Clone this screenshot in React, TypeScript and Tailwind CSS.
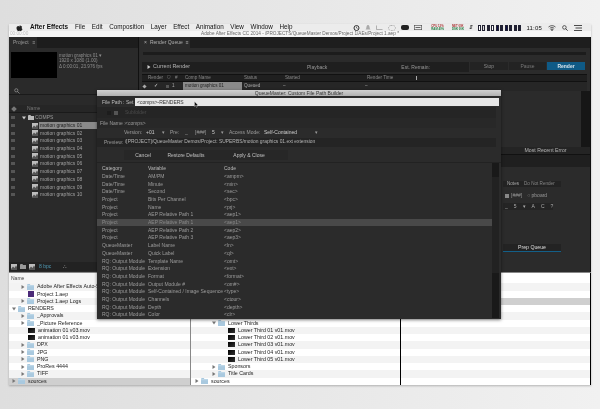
import React from "react";

const Tri = ({ open, c = "#777" }: { open?: boolean; c?: string }) => (
  <svg width="4" height="4" viewBox="0 0 4 4" className="shrink-0">
    <path d={open ? "M0 .5H4L2 3.5Z" : "M.5 0V4L3.5 2Z"} fill={c} />
  </svg>
);
const Folder = ({ c = "#a9c9df" }: { c?: string }) => (
  <svg width="7" height="6" viewBox="0 0 7 6" className="shrink-0">
    <path d="M0 1V6H7V1H3.4L2.8 0H.6Z" fill={c} />
    <path d="M0 1.7H7" stroke="#d8e8f2" strokeWidth=".5" />
  </svg>
);
const Mov = () => (
  <svg width="7" height="5" viewBox="0 0 7 5" className="shrink-0">
    <defs>
      <linearGradient id="mv" x1="0" y1="0" x2="1" y2="1">
        <stop offset="0" stopColor="#000" />
        <stop offset="1" stopColor="#333" />
      </linearGradient>
    </defs>
    <rect width="7" height="5" fill="url(#mv)" />
  </svg>
);
const CompIcon = () => (
  <svg width="6" height="6" viewBox="0 0 6 6" className="shrink-0">
    <rect width="6" height="6" fill="#bdbdbd" />
    <path d="M0 5L2 2.5L3.5 4L5 1.5L6 3V6H0Z" fill="#555" />
  </svg>
);

const comps = ["01", "02", "03", "04", "05", "06", "07", "08", "09", "10"];

const table: [string, string, string, boolean?][] = [
  ["Date/Time", "AM/PM", "<ampm>"],
  ["Date/Time", "Minute", "<min>"],
  ["Date/Time", "Second", "<sec>"],
  ["Project", "Bits Per Channel", "<bpc>"],
  ["Project", "Name", "<prj>"],
  ["Project", "AEP Relative Path 1", "<aep1>"],
  ["Project", "AEP Relative Path 1", "<aep1>", true],
  ["Project", "AEP Relative Path 2", "<aep2>"],
  ["Project", "AEP Relative Path 3", "<aep3>"],
  ["QueueMaster", "Label Name", "<ln>"],
  ["QueueMaster", "Quick Label", "<ql>"],
  ["RQ: Output Module", "Template Name", "<omt>"],
  ["RQ: Output Module", "Extension", "<ext>"],
  ["RQ: Output Module", "Format", "<format>"],
  ["RQ: Output Module", "Output Module #", "<om#>"],
  ["RQ: Output Module", "Self-Contained / Image Sequence", "<type>"],
  ["RQ: Output Module", "Channels", "<ctour>"],
  ["RQ: Output Module", "Depth", "<depth>"],
  ["RQ: Output Module", "Color", "<clr>"],
];

type L = { t: string; k: "f" | "m" | "a" | ""; tw?: "o" | "c"; pl: string; bg?: string };
const left: L[] = [
  { t: "Adobe After Effects Auto-Save", k: "f", tw: "c", pl: "pl-[12px]" },
  { t: "Project 1.aep", k: "a", pl: "pl-[19px]" },
  { t: "Project 1.aep Logs", k: "f", tw: "c", pl: "pl-[12px]" },
  { t: "RENDERS", k: "f", tw: "o", pl: "pl-[3px]" },
  { t: "_Approvals", k: "f", tw: "c", pl: "pl-[12px]" },
  { t: "_Picture Reference", k: "f", tw: "c", pl: "pl-[12px]" },
  { t: "animation 01 v03.mov", k: "m", pl: "pl-[19px]" },
  { t: "animation 01 v03.mov", k: "m", pl: "pl-[19px]" },
  { t: "DPX", k: "f", tw: "c", pl: "pl-[12px]" },
  { t: "JPG", k: "f", tw: "c", pl: "pl-[12px]" },
  { t: "PNG", k: "f", tw: "c", pl: "pl-[12px]" },
  { t: "ProRes 4444", k: "f", tw: "c", pl: "pl-[12px]" },
  { t: "TIFF", k: "f", tw: "c", pl: "pl-[12px]" },
  { t: "sources", k: "f", tw: "c", pl: "pl-[3px]", bg: "bg-[#cfcfcf]" },
];
const mid: L[] = [
  { t: "", k: "", pl: "" },
  { t: "", k: "", pl: "" },
  { t: "", k: "", pl: "" },
  { t: "", k: "", pl: "" },
  { t: "", k: "", pl: "" },
  { t: "Lower Thirds", k: "f", tw: "o", pl: "pl-[21px]" },
  { t: "Lower Third 01 v01.mov", k: "m", pl: "pl-[37px]" },
  { t: "Lower Third 02 v01.mov", k: "m", pl: "pl-[37px]" },
  { t: "Lower Third 03 v01.mov", k: "m", pl: "pl-[37px]" },
  { t: "Lower Third 04 v01.mov", k: "m", pl: "pl-[37px]" },
  { t: "Lower Third 05 v01.mov", k: "m", pl: "pl-[37px]" },
  { t: "Sponsors", k: "f", tw: "c", pl: "pl-[21px]" },
  { t: "Title Cards", k: "f", tw: "c", pl: "pl-[21px]" },
  { t: "sources", k: "f", tw: "c", pl: "pl-[4px]" },
];

const FileRow = ({ r, i }: { r: L; i: number }) => (
  <div className={`h-[7.25px] flex items-center gap-[2px] text-[5.3px] leading-none text-[#222] whitespace-nowrap overflow-hidden ${r.pl} ${r.bg ?? (i % 2 ? "bg-white" : "bg-[#f3f3f3]")}`}>
    {r.tw && <Tri open={r.tw === "o"} />}
    {r.k === "f" && <Folder />}
    {r.k === "m" && <Mov />}
    {r.k === "a" && <div className="w-[6px] h-[6px] bg-[#4b2a78] shrink-0" />}
    <span className="ml-[1px]">{r.t}</span>
  </div>
);

const Bars = () => (
  <div className="flex items-end gap-[1.5px] h-[7px]">
    {["#fff", "#ddd", "#223", "#fff", "#114", "#223", "#114", "#223", "#223", "#223"].map((c, i) => (
      <div key={i} className="w-[3px] h-[6px] border-[0.5px] border-[#223]" style={{ background: c }} />
    ))}
  </div>
);

export default function App() {
  return (
    <div className="relative w-[600px] h-[409px] overflow-hidden bg-gradient-to-r from-[#dedede] to-[#f1f1f1] pt-[24px] pl-[9px] font-['Liberation_Sans',sans-serif] blur-[0.4px]">
      <div className="w-[582px] h-[361px] flex flex-col shadow-[0_1px_2px_rgba(0,0,0,0.25)]">
        {/* menu bar */}
        <div className="h-[7px] bg-[#ececec] flex items-center pl-[7px] pr-[9px] text-[#111] text-[6.3px] leading-none">
          <svg width="7" height="6" viewBox="0 0 7 7" className="mr-[7px]"><path d="M5 1.2C4 1.2 3.8 1.7 3.4 1.7 3 1.7 2.6 1.2 2 1.2 1 1.2 0 2 0 3.6 0 5 1 7 2 7c.6 0 .8-.4 1.4-.4S4.300 7 5 7C6 7 7 5.200 7 4.800 6 4.400 5.800 2.600 6.600 2 6.200 1.400 5.600 1.200 5 1.200ZM4.900 0C4.100.1 3.500.7 3.500 1.200 4.200 1.200 4.900.6 4.900 0Z" fill="#222" /></svg>
          <span className="font-bold mr-[7px] text-[6.4px]">After Effects</span>
          <div className="flex gap-[6.6px]">
            <span>File</span><span>Edit</span><span>Composition</span><span>Layer</span><span>Effect</span><span>Animation</span><span>View</span><span>Window</span><span>Help</span>
          </div>
          <div className="ml-auto flex items-center gap-[5px]">
            <svg width="7" height="6" viewBox="0 0 7 6"><circle cx="3.500" cy="3" r="2.500" fill="none" stroke="#333" /><path d="M3.500 1.500V3L4.500 3.500" stroke="#333" strokeWidth=".6" fill="none" /></svg>
            <svg width="6" height="6" viewBox="0 0 6 6"><path d="M3 0C1.500 0 1.500 2 1.200 3.500L.5 4.500H5.500L4.800 3.500C4.500 2 4.500 0 3 0Z" fill="#aaa" /></svg>
            <svg width="7" height="5" viewBox="0 0 7 5"><path d="M.5 .5V4.500H6.500" stroke="#888" fill="none" strokeWidth=".6" /></svg>
            <svg width="8" height="6" viewBox="0 0 8 6"><rect x=".5" y=".5" width="7" height="5" rx="2.500" fill="none" stroke="#888" strokeDasharray="1.500 1" strokeWidth=".6" /></svg>
            <div className="w-[8px] h-[5px] bg-[#222] rounded-[2px]" />
            <svg width="8" height="5" viewBox="0 0 8 5"><rect x=".3" y=".3" width="7.400" height="4.400" fill="none" stroke="#444" strokeWidth=".6" /><path d="M1.500 2.500H6.500" stroke="#444" strokeWidth=".8" /></svg>
            <div className="flex flex-col text-[2.8px] leading-[3px] font-bold ml-[4px] text-[#1b7a3d]"><span className="text-[#a33]">CPU 12%</span><span>RAM 40%</span></div>
            <div className="flex flex-col text-[2.8px] leading-[3px] font-bold ml-[3px] text-[#1b7a3d]"><span className="text-[#a33]">NET 00K</span><span>DSK 00K</span></div>
            <span className="text-[5px]">⇵</span>
            <Bars />
            <span className="text-[6px] tracking-[0.2px]">11:05</span>
            <svg width="8" height="6" viewBox="0 0 8 6" className="ml-[1px]"><path d="M.5 2C2.500 .2 5.500 .2 7.500 2M1.800 3.300C3 2.300 5 2.300 6.200 3.300M4 5.800L2.900 4.400C3.500 4 4.500 4 5.100 4.400Z" fill="none" stroke="#222" strokeWidth=".7" /></svg>
            <svg width="6" height="6" viewBox="0 0 6 6" className="ml-[1px]"><circle cx="2.400" cy="2.400" r="1.800" fill="none" stroke="#222" strokeWidth=".7" /><path d="M3.700 3.700L5.700 5.700" stroke="#222" strokeWidth=".8" /></svg>
            <svg width="8" height="6" viewBox="0 0 8 6" className="ml-[1px]"><path d="M0 .5H8M1.500 3H8M0 5.500H8" stroke="#222" strokeWidth=".8" /></svg>
          </div>
        </div>
        {/* title bar */}
        <div className="h-[6px] bg-[#f6f6f6] grid grid-cols-[1fr_auto_1fr] items-center pt-[1px] text-[4.7px] leading-none text-[#666] whitespace-nowrap">
          <span className="pl-[1px] text-[#bdbdbd]">00:00:00</span>
          <span>Adobe After Effects CC 2014 - /PROJECTS/QueueMaster Demos/Project 1/AEs/Project 1.aep *</span>
          <span />
        </div>

        {/* dark workspace */}
        <div className="h-[235px] flex bg-[#111] text-[#a8a8a8] text-[5px] leading-none">
          {/* project panel */}
          <div className="w-[129px] flex flex-col bg-[#2a2a2a]">
            <div className="h-[11px] bg-[#1d1d1d] flex">
              <div className="w-[28px] bg-[#2a2a2a] flex items-center pl-[4px] gap-[4px] text-[#999]">Project <span>≡</span></div>
            </div>
            <div className="h-[39px] flex pt-[4px] pl-[2px]">
              <div className="w-[46px] h-[26px] bg-black" />
              <div className="pl-[2px] pt-[2px] flex flex-col gap-[0.8px] text-[#8f8f8f] whitespace-nowrap text-[4.6px]">
                <span>motion graphics 01 ▾</span>
                <span>1920 x 1080 (1.00)</span>
                <span>Δ 0:00:01, 23.976 fps</span>
              </div>
            </div>
            <div className="h-[8px] flex items-center pl-[5px] border-b border-[#1a1a1a]">
              <svg width="6" height="6" viewBox="0 0 6 6"><circle cx="2.300" cy="2.300" r="1.600" fill="none" stroke="#999" strokeWidth=".7" /><path d="M3.400 3.400L5.500 5.500" stroke="#999" strokeWidth=".7" /></svg>
            </div>
            <div className="h-[11px]" />
            <div className="h-[8px] flex items-center bg-[#262626] border-b border-[#1a1a1a] pl-[3px] gap-[11px] text-[#777] mt-[-1px]">
              <div className="w-[4px] h-[4px] bg-[#777] rotate-45" />
              <span>Name</span>
            </div>
            <div className="h-[7.7px] flex items-center pl-[2px] gap-[5px] text-[#9a9a9a] mt-[1px]">
              <div className="w-[4px] h-[3px] bg-[#555]" />
              <div className="flex items-center gap-[1.500px] pl-[2px]">
                <Tri open c="#ccc" />
                <svg width="6" height="5" viewBox="0 0 6 5"><path d="M0 1V5H6V1H3L2.500 0H.5Z" fill="#bbb" /></svg>
                <span>COMPS</span>
              </div>
            </div>
            {comps.map((c, i) => (
              <div key={c} className="h-[7.7px] flex items-center pl-[2px] text-[5px] text-[#a0a0a0]">
                <div className="w-[4px] h-[3px] bg-[#555] mr-[17px]" />
                <CompIcon />
                <span className={`ml-[1px] h-full flex items-center pl-[1px] whitespace-nowrap ${i === 0 ? "w-[58px] bg-[#8a8a8a] text-[#222]" : ""}`}>
                  motion graphics {c}
                </span>
              </div>
            ))}
            <div className="flex-1" />
            <div className="h-[9px] bg-[#222] flex items-center pl-[2px] gap-[3px] mb-[1px]">
              <CompIcon />
              <svg width="6" height="5" viewBox="0 0 6 5"><path d="M0 1V5H6V1H3L2.500 0H.5Z" fill="#999" /></svg>
              <CompIcon />
              <span className="text-[#4f9ab5] ml-[1px]">8 bpc</span>
              <span className="ml-[9px] text-[#999]">⛬</span>
            </div>
          </div>

          {/* render queue */}
          <div className="ml-[1px] flex-1 flex flex-col bg-[#2b2b2b] mr-[1px]">
            <div className="h-[11px] bg-[#1e1e1e] flex">
              <div className="w-[51px] bg-[#2b2b2b] flex items-center pl-[5px] gap-[3px] text-[#b0b0b0] whitespace-nowrap">× <span>Render Queue</span> <span>≡</span></div>
            </div>
            <div className="h-[3px] mt-[4px] mx-[4px] bg-[#1c1c1c]" />
            <div className="h-[10px] mt-[7px] mx-[3px] flex text-[5px]">
              <div className="w-[327px] bg-[#1f1f1f] flex items-center text-[#b5b5b5] whitespace-nowrap">
                <div className="w-[34px] pl-[5px] flex items-center gap-[2px] text-[5.4px]"><Tri c="#ccc" /><span>Current Render</span></div>
                <span className="ml-[131px] text-[#999]">Playback</span>
                <span className="ml-[74px] text-[#999]">Est. Remain:</span>
              </div>
              <div className="ml-[1px] flex h-[8px] gap-[1px]">
                <div className="w-[38px] bg-[#232323] flex items-center justify-center text-[#888]">Stop</div>
                <div className="w-[37px] bg-[#232323] flex items-center justify-center text-[#777]">Pause</div>
                <div className="w-[38px] bg-[#0f5a86] flex items-center justify-center text-[#d7e4ec] font-bold">Render</div>
              </div>
            </div>
            <div className="h-[8px] mt-[2px] mx-[3px] bg-[#1f1f1f] border-y border-[#111] flex items-center text-[#888] text-[4.6px] whitespace-nowrap">
              <span className="w-[25px] pl-[6px]">Render</span>
              <span className="w-[8px]">⛉</span>
              <span className="w-[10px]">#</span>
              <span className="w-[59px]">Comp Name</span>
              <span className="w-[41px]">Status</span>
              <span className="w-[82px]">Started</span>
              <span className="w-[50px] border-r border-[#aaa]">Render Time</span>
            </div>
            <div className="h-[9px] mx-[3px] bg-[#262626] flex items-center text-[#aaa] text-[4.6px] whitespace-nowrap">
              <span className="w-[3px] ml-[1px] h-[3px] bg-[#aaa] rotate-45" />
              <span className="ml-[8px] w-[12px] text-[#ddd]">✓</span>
              <span className="w-[3px] h-[3px] bg-[#555]" />
              <span className="ml-[3px] w-[11px]">1</span>
              <span className="w-[59px] h-full flex items-center pl-[2px] bg-[#8a8a8a] text-[#222]">motion graphics 01</span>
              <span className="w-[41px] pl-[2px]">Queued</span>
              <span className="w-[82px]">–</span>
              <span>–</span>
            </div>
            <div className="flex-1 flex flex-col min-h-0">
              <div className="h-[56px] flex justify-end"><div className="w-[9px] bg-[#161616]" /></div>
              <div className="h-[8px] flex bg-[#242424] border-b border-[#111]">
                <div className="ml-auto w-[89px] flex items-center justify-center text-[#b5b5b5] text-[5.2px]">Most Recent Error</div>
              </div>
              <div className="h-[12px] bg-[#1f1f1f]" />
              <div className="flex-1 ml-auto w-[88px] flex flex-col pt-[14px] pl-[1px] text-[5px] text-[#aaa]">
                <div className="w-[58px] h-[6px] flex items-center bg-[#232323] gap-[5px] pl-[4px] text-[4.6px] whitespace-nowrap"><span>Notes</span><span className="text-[#888]">Do Not Render</span></div>
                <div className="flex items-center gap-[2px] mt-[6px] pl-[2px] text-[#999] whitespace-nowrap">
                  <span className="w-[4px] h-[4px] bg-[#888] inline-block" />
                  <span>[###]</span>
                  <span className="ml-[3px]">○ pboard</span>
                </div>
                <div className="flex items-center gap-[6px] mt-[5px] pl-[2px] w-[50px] h-[7px] bg-[#242424] text-[#aaa]">
                  <span>_</span><span>5</span><span>▾</span><span>A</span><span>C</span><span>?</span>
                </div>
                <div className="mt-[34px] w-[58px] h-[7px] bg-[#232323] flex items-center justify-center text-[#ddd] text-[5.2px]">Prep Queue</div>
                <div className="w-[58px] h-[1px] bg-[#135f88]" />
              </div>
            </div>
          </div>
        </div>

        {/* finder area */}
        <div className="h-[113px] flex bg-white border-t border-[#888]">
          <div className="w-[182px] border-r border-[#888] flex flex-col">
            <div className="h-[10.300px] flex items-center pl-[2px] text-[5px] leading-none text-[#444] bg-[#f5f5f5]">Name</div>
            {left.map((r, i) => <FileRow key={i} r={r} i={i} />)}
          </div>
          <div className="w-[210px] border-r border-black flex flex-col">
            <div className="h-[10.300px] bg-[#f5f5f5]" />
            {mid.map((r, i) => <FileRow key={i} r={r} i={i} />)}
          </div>
          <div className="flex-1 border-r border-black flex flex-col">
            <div className="h-[10.300px] bg-white" />
            {mid.map((_, i) => (
              <div key={i} className={`h-[7.250px] ${i === 2 ? "bg-[#cfcfcf]" : i % 2 ? "bg-white" : "bg-[#f3f3f3]"}`} />
            ))}
          </div>
        </div>
      </div>

      {/* dialog */}
      <div className="absolute left-[97px] top-[90px] w-[404px] h-[229px] bg-[#2b2b2b] shadow-[0_1px_3px_rgba(0,0,0,0.5)] flex flex-col text-[#9c9c9c] text-[5px] leading-none whitespace-nowrap overflow-hidden">
        <div className="h-[6px] bg-gradient-to-b from-[#d0d0d0] to-[#b0b0b0] flex items-center justify-center text-[5px] text-[#333]">
          <span>QueueMaster: Custom File Path Builder</span>
        </div>
        <div className="h-[8px] mt-[2px] flex items-center">
          <span className="ml-[5px] w-[24px] text-[#bbb]">File Path :</span>
          <span className="w-[9px] text-[#bbb]">Set</span>
          <div className="w-[364px] h-full bg-[#e6e6e6] flex items-center pl-[2px] text-[#333]">&lt;comps&gt;-RENDERS</div>
        </div>
        <div className="h-[11px] mt-[1px] flex items-center pl-[10px] bg-[#252525] mr-[5px]">
          <span className="w-[4px] h-[4px] bg-[#1d1d1d]" />
          <span className="ml-[3px] w-[4px] h-[4px] bg-[#555]" />
          <span className="ml-[7px] text-[#4a4a4a]">Subfolder</span>
        </div>
        <div className="h-[10px] flex items-center bg-[#282828] mr-[5px]">
          <span className="ml-[3px] w-[25px]">File Name :</span>
          <span>&lt;comps&gt;</span>
        </div>
        <div className="h-[9px] flex items-center">
          <span className="ml-[27px] w-[22px]">Version:</span>
          <span className="w-[16px] text-[#ccc]">+01</span>
          <span className="w-[8px]">▾</span>
          <span className="w-[15px]">Pre:</span>
          <span className="w-[10px]">_</span>
          <span className="w-[17px]">[###]</span>
          <span className="w-[9px] text-[#ccc]">5</span>
          <span className="w-[8px]">▾</span>
          <span className="w-[35px]">Access Mode:</span>
          <span className="w-[51px] text-[#ccc]">Self-Contained</span>
          <span>▾</span>
        </div>
        <div className="h-[9px] mt-[1px] flex items-center bg-[#242424] mr-[5px]">
          <span className="ml-[7px] w-[21px]">Preview:</span>
          <span className="text-[#b5b5b5] text-[4.9px]">/[PROJECT]/QueueMaster Demos/Project: SUPERBS/motion graphics 01.ext extension</span>
        </div>
        <div className="h-[10px] mt-[3px] ml-[27px] w-[164px] flex bg-[#272727] text-[#c0c0c0]">
          <div className="w-[38px] flex items-center justify-center">Cancel</div>
          <div className="w-[48px] flex items-center justify-center">Restore Defaults</div>
          <div className="flex-1 flex items-center justify-center">Apply &amp; Close</div>
        </div>
        <div className="flex-1 flex min-h-0 mt-[2px] border-t border-[#222]">
          <div className="flex-1 min-w-0 overflow-hidden pt-[1px]">
            <div className="h-[1px]" />
            <div className="h-[7.600px] flex items-center text-[#bbb]">
              <span className="ml-[5px] w-[46px]">Category</span>
              <span className="w-[76px]">Variable</span>
              <span>Code</span>
            </div>
            {table.map(([a, b, c, on], i) => (
              <div key={i} className={`h-[7.700px] flex items-center ${on ? "bg-[#494949] text-[#8a8a8a]" : ""}`}>
                <span className="ml-[5px] w-[46px]">{a}</span>
                <span className="w-[76px]">{b}</span>
                <span>{c}</span>
              </div>
            ))}
          </div>
          <div className="w-[7px] mr-[2px] mb-[1px] bg-[#191919] flex flex-col">
            <div className="h-[14px]" />
            <div className="h-[96px] bg-[#222]" />
          </div>
        </div>
      </div>

      {/* mouse pointer */}
      <svg width="5" height="7" viewBox="0 0 5 7" className="absolute left-[194px] top-[101px]">
        <path d="M.5 .5V5.500L1.700 4.500L2.500 6.500L3.400 6L2.600 4.200H4.200Z" fill="#111" stroke="#fff" strokeWidth=".3" />
      </svg>
    </div>
  );
}
